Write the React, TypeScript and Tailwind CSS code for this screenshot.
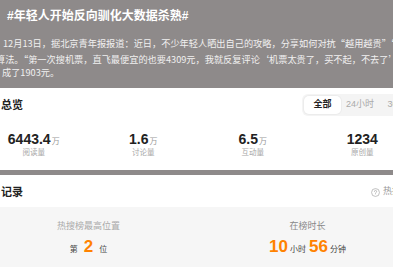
import React from "react";

const font = "font-['Liberation_Sans','Noto_Sans_CJK_SC',sans-serif]";
const cjk = "font-['Noto_Sans_CJK_SC','Noto_Sans',sans-serif]";

const stats = [
    { key: "read", value: "6443.4", unit: "万", label: "阅读量" },
    { key: "talk", value: "1.6", unit: "万", label: "讨论量" },
    { key: "interact", value: "6.5", unit: "万", label: "互动量" },
    { key: "original", value: "1234", unit: "", label: "原创量" },
];

const tabs = ["全部", "24小时", "30天"];

const App = () => {
    return (
        <div className={`w-[393px] h-[267px] overflow-hidden bg-[#8e8a8a] ${font}`}>
            {/* topic header */}
            <div className="h-[88px] overflow-hidden">
                <h1 className="pt-[8px] pl-[7px] text-[12px] leading-[16px] font-bold text-white whitespace-nowrap">
                    #年轻人开始反向驯化大数据杀熟#
                </h1>
                <div className={`mt-[12px] text-[9.2px] leading-[15px] text-[#f1f0f0] whitespace-nowrap ${cjk}`}>
                    <p className="ml-[3px]">
                        12月13日，据北京青年报报道：近日，不少年轻人晒出自己的攻略，分享如何对抗“越用越贵”“大数据杀熟”
                    </p>
                    <p className="ml-[-4px] mt-[1px]">
                        算法。“第一次搜机票，直飞最便宜的也要4309元，我就反复评论‘机票太贵了，买不起，不去了’
                    </p>
                    <p className="ml-[2px] mt-[-2px]">成了1903元。</p>
                </div>
            </div>

            {/* overview card */}
            <section className="bg-white h-[82px]">
                <div className="flex items-center justify-between h-[30px] pt-[4px]">
                    <h2 className="pl-[1px] text-[11px] font-bold text-[#222]">总览</h2>
                    <div className="flex items-center h-[22px] w-[91px] p-[2px] rounded-l-[6px] bg-[#f4f4f4] overflow-hidden whitespace-nowrap">
                        {tabs.map((tab, i) => (
                            <span
                                key={tab}
                                className={
                                    i === 0
                                        ? "shrink-0 flex items-center justify-center w-[37px] h-[18px] rounded-[5px] bg-white shadow-[0_0_0_1px_#ececec] text-[9px] font-bold text-[#222]"
                                        : "shrink-0 flex items-center justify-center px-[3px] ml-[1px] w-[36px] h-[18px] text-[9px] text-[#aaa]"
                                }
                            >
                                {tab}
                            </span>
                        ))}
                    </div>
                </div>
                <div className="ml-[-21px] w-[438px] grid grid-cols-4 pt-[13px]">
                    {stats.map((s) => (
                        <div key={s.key} className="flex flex-col items-center">
                            <div className="flex items-baseline h-[17px] leading-[17px]">
                                <span className="text-[14px] font-bold text-[#222]">{s.value}</span>
                                {s.unit && (
                                    <span className="ml-[1px] text-[8px] text-[#999]">{s.unit}</span>
                                )}
                            </div>
                            <span className="text-[7.5px] leading-[10px] text-[#a8a8a8]">{s.label}</span>
                        </div>
                    ))}
                </div>
            </section>

            {/* record card */}
            <section className="mt-[5px] bg-white h-[92px]">
                <div className="flex items-center justify-between h-[32px] pt-[2px]">
                    <h2 className="pl-[1px] text-[11px] font-bold text-[#222]">记录</h2>
                    <div className="flex items-center gap-[3px] mr-[-8px] text-[9px] text-[#999] whitespace-nowrap">
                        <svg width="9" height="9" viewBox="0 0 16 16" fill="none" stroke="#aaa" strokeWidth="1.3">
                            <circle cx="8" cy="8" r="7" />
                            <path d="M6 6.2a2 2 0 1 1 2.6 1.9c-.4.2-.6.5-.6.9v.8" strokeLinecap="round" />
                            <circle cx="8" cy="11.6" r=".6" fill="#aaa" stroke="none" />
                        </svg>
                        <span>热搜</span>
                    </div>
                </div>
                <div className="ml-[-21px] w-[438px] h-[60px] bg-[#f6f6f6] grid grid-cols-2">
                    <div className="flex flex-col items-center pt-[13px]">
                        <span className="text-[9px] leading-[12px] text-[#aaa]">热搜榜最高位置</span>
                        <div className="flex items-baseline gap-[6px] mt-[6px] leading-[18px]">
                            <span className="text-[8px] text-[#444]">第</span>
                            <span className="text-[17px] font-bold text-[#ff8200]">2</span>
                            <span className="text-[8px] text-[#444]">位</span>
                        </div>
                    </div>
                    <div className="flex flex-col items-center pt-[13px]">
                        <span className="text-[9px] leading-[12px] text-[#888]">在榜时长</span>
                        <div className="flex items-baseline gap-[2px] mt-[6px] leading-[18px]">
                            <span className="text-[17px] font-bold text-[#ff8200]">10</span>
                            <span className="text-[8px] text-[#444]">小时</span>
                            <span className="ml-[1px] text-[17px] font-bold text-[#ff8200]">56</span>
                            <span className="text-[8px] text-[#444]">分钟</span>
                        </div>
                    </div>
                </div>
            </section>
        </div>
    );
};

export default App;
